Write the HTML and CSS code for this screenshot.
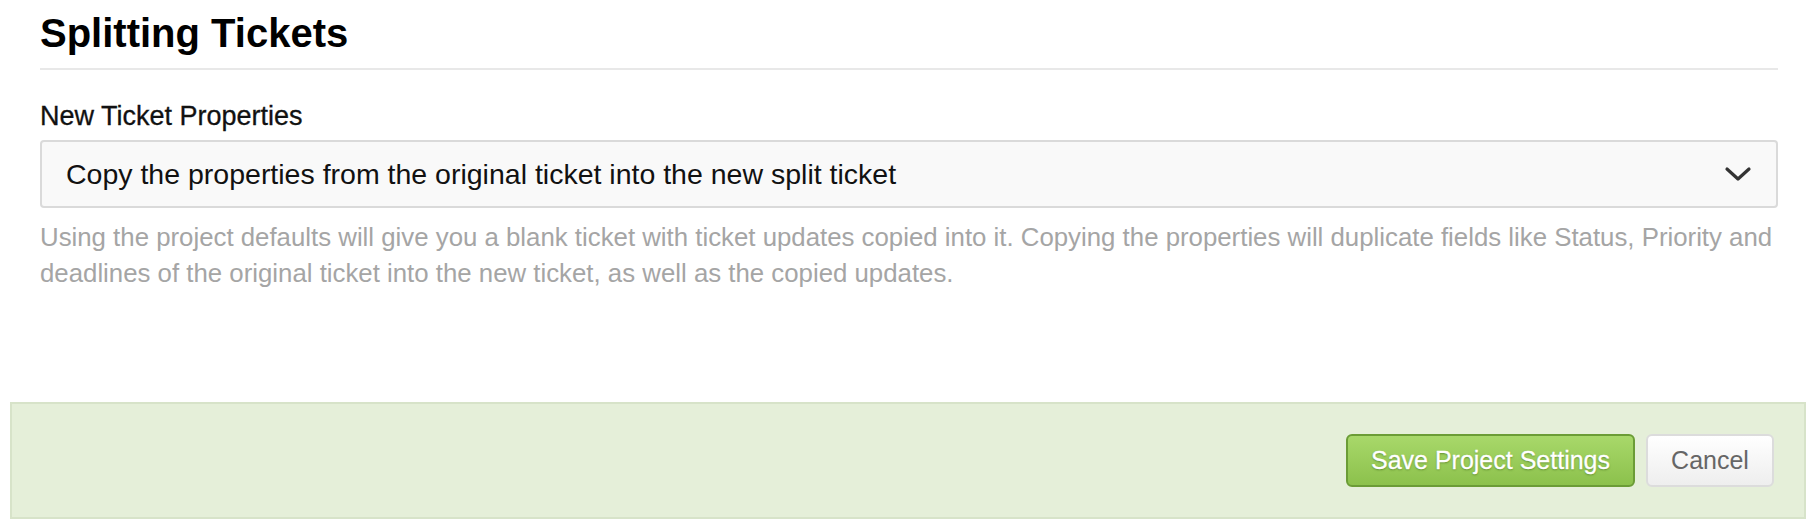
FILE: index.html
```html
<!DOCTYPE html>
<html>
<head>
<meta charset="utf-8">
<link rel="stylesheet" href="styles.css">
</head>
<body>
<div class="page">
  <section class="section">
    <h1 class="section-title">Splitting Tickets</h1>
    <div class="field">
      <label class="field-label">New Ticket Properties</label>
      <div class="select">
        <span class="select-value">Copy the properties from the original ticket into the new split ticket</span>
        <svg class="select-chevron" width="28" height="18" viewBox="0 0 28 18"><path d="M3 4 L14 14 L25 4" fill="none" stroke="#333" stroke-width="3.2" stroke-linecap="round" stroke-linejoin="round"/></svg>
      </div>
      <p class="field-help">Using the project defaults will give you a blank ticket with ticket updates copied into it. Copying the properties will duplicate fields like Status, Priority and deadlines of the original ticket into the new ticket, as well as the copied updates.</p>
    </div>
  </section>
  <footer class="actions">
    <button class="btn btn-primary">Save Project Settings</button>
    <button class="btn btn-default">Cancel</button>
  </footer>
</div>
</body>
</html>
```
FILE: styles.css
```css
html, body {
  margin: 0;
  padding: 0;
  background: #fff;
}
body {
  font-family: "Liberation Sans", Arial, sans-serif;
  color: #000;
}
.page {
  padding: 0 10px;
}
.section {
  padding: 0 28px 0 30px;
}
.section-title {
  margin: 0;
  padding-top: 10px;
  font-size: 40px;
  line-height: 46px;
  font-weight: bold;
  padding-bottom: 12px;
  border-bottom: 2px solid #e8e8e8;
}
.field {
  padding-top: 31px;
}
.field-label {
  display: block;
  font-size: 27px;
  line-height: 30px;
  color: #111;
  -webkit-text-stroke: 0.3px #111;
  margin-bottom: 9px;
}
.select {
  display: flex;
  align-items: center;
  justify-content: space-between;
  height: 64px;
  border: 2px solid #dadada;
  border-radius: 4px;
  background: #f9f9f9;
  padding: 0 24px 0 24px;
}
.select-value {
  font-size: 28.5px;
  color: #111;
}
.select-chevron {
  display: block;
}
.field-help {
  margin: 11px 0 0;
  font-size: 25.8px;
  line-height: 36px;
  color: #a5a5a5;
}
.actions {
  margin-top: 111px;
  height: 113px;
  border: 2px solid #d7e3c9;
  background: #e5efd9;
  display: flex;
  align-items: center;
  justify-content: flex-end;
  gap: 11px;
  padding: 0 30px 0 0;
}
.btn {
  font-family: "Liberation Sans", Arial, sans-serif;
  font-size: 25px;
  height: 53px;
  border-radius: 6px;
  cursor: pointer;
}
.btn-primary {
  width: 289px;
  color: #fff;
  -webkit-text-stroke: 0.3px #fff;
  border: 2px solid #6b9c36;
  background: linear-gradient(#a8d86a, #8cc14c);
  text-shadow: 0 1px 2px rgba(60, 100, 20, 0.6);
}
.btn-default {
  width: 128px;
  color: #666;
  border: 2px solid #dcdcdc;
  background: linear-gradient(#ffffff, #eeeeee);
}
```
